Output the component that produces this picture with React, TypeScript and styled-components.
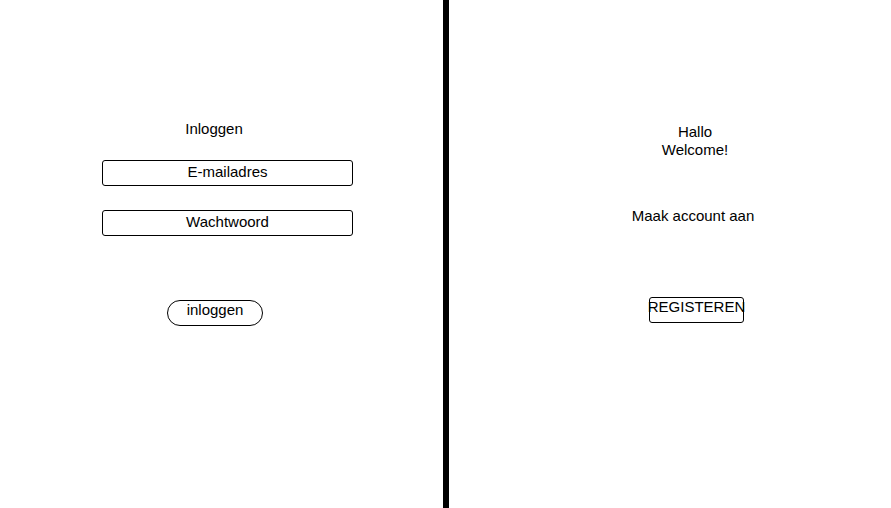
import React from "react";
import styled, { createGlobalStyle } from "styled-components";

const Global = createGlobalStyle`
  html, body { margin: 0; padding: 0; background: #fff; }
  body { font-family: "Liberation Sans", Arial, sans-serif; font-size: 15px; color: #000; }
`;

const Page = styled.div`
  display: flex;
  width: 891px;
  height: 508px;
  overflow: hidden;
`;

const Panel = styled.section<{ $w?: number; $top: number }>`
  display: flex;
  flex-direction: column;
  align-items: flex-start;
  width: ${(p) => (p.$w ? `${p.$w}px` : "auto")};
  flex: ${(p) => (p.$w ? "none" : "1")};
  padding-top: ${(p) => p.$top}px;
  box-sizing: border-box;
`;

const Divider = styled.div`
  flex: none;
  width: 6px;
  height: 508px;
  background: #000;
`;

const Label = styled.div<{ $x: number; $mt?: number }>`
  width: 200px;
  margin-left: ${(p) => p.$x}px;
  margin-top: ${(p) => p.$mt ?? 0}px;
  text-align: center;
  line-height: 18px;
  white-space: nowrap;
`;

const Field = styled.div<{ $mt: number }>`
  box-sizing: border-box;
  width: 251px;
  height: 26px;
  margin-left: 102px;
  margin-top: ${(p) => p.$mt}px;
  border: 1px solid #000;
  border-radius: 3px;
  display: flex;
  align-items: center;
  justify-content: center;
  line-height: 17px;
  padding-bottom: 4px;
`;

const Button = styled.div<{ $x: number; $w: number; $mt: number; $round?: boolean }>`
  box-sizing: border-box;
  width: ${(p) => p.$w}px;
  height: 26px;
  margin-left: ${(p) => p.$x}px;
  margin-top: ${(p) => p.$mt}px;
  border: 1px solid #000;
  border-radius: ${(p) => (p.$round ? "13px" : "3px")};
  display: flex;
  justify-content: center;
  align-items: flex-start;
  line-height: 16px;
  white-space: nowrap;
`;

const ButtonText = styled.span<{ $dy: number }>`
  display: block;
  margin-top: ${(p) => p.$dy}px;
`;

export default function App() {
  return (
    <>
      <Global />
      <Page>
        <Panel $w={443} $top={120}>
          <Label $x={114}>Inloggen</Label>
          <Field $mt={22}>E-mailadres</Field>
          <Field $mt={24}>Wachtwoord</Field>
          <Button $x={167} $w={96} $mt={64} $round>
            <ButtonText $dy={1}>inloggen</ButtonText>
          </Button>
        </Panel>
        <Divider />
        <Panel $top={123}>
          <Label $x={146}>
            Hallo
            <br />
            Welcome!
          </Label>
          <Label $x={144} $mt={48}>Maak account aan</Label>
          <Button $x={200} $w={95} $mt={72}>
            <ButtonText $dy={1}>REGISTEREN</ButtonText>
          </Button>
        </Panel>
      </Page>
    </>
  );
}
